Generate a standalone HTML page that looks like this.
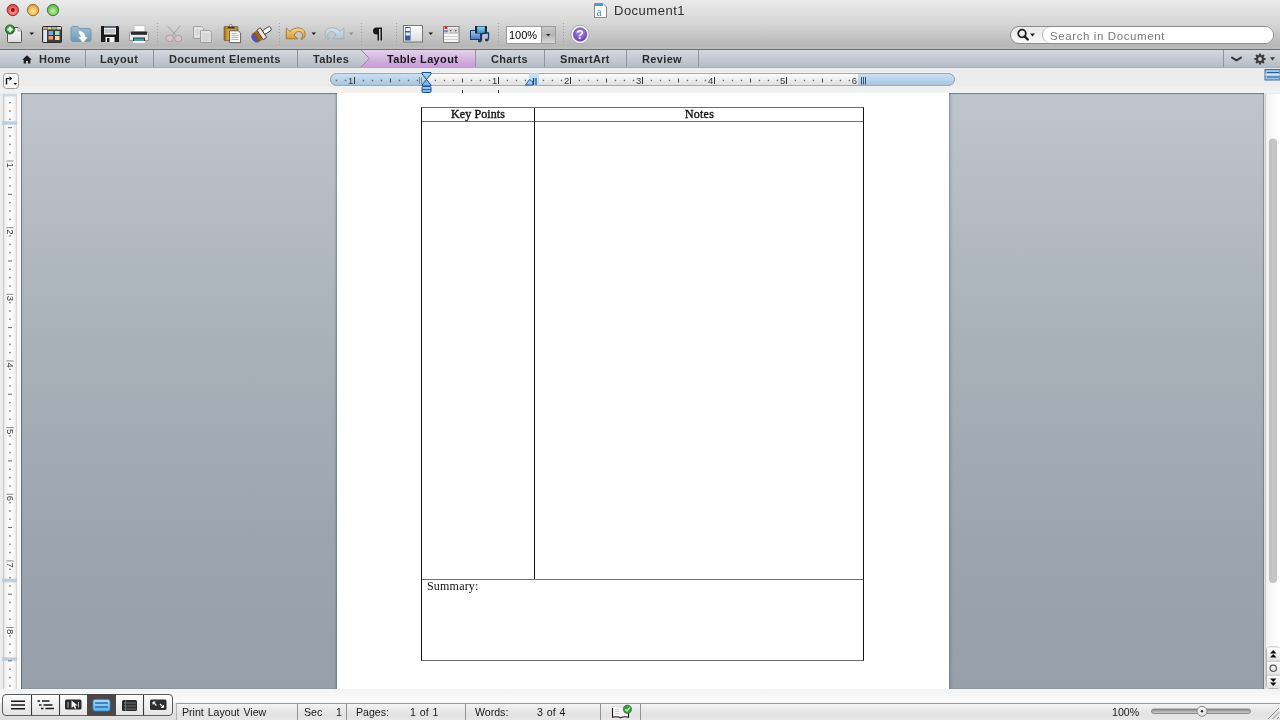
<!DOCTYPE html>
<html><head><meta charset="utf-8">
<style>
*{margin:0;padding:0;box-sizing:border-box}
html,body{width:1280px;height:720px;overflow:hidden;background:#ececec;font-family:"Liberation Sans",sans-serif}
.a{position:absolute}
#top{left:0;top:0;width:1280px;height:50px;background:linear-gradient(#eaeaea 0px,#d8d8d8 22px,#c2c2c2 38px,#b6b6b6 46px,#bdbdbd 48px);border-bottom:1px solid #6e6e6e}
#tabs{left:0;top:50px;width:1280px;height:20px;background:linear-gradient(#d4d8de 0px,#c4cad2 9px,#b3bcc6 17px,#a9b1bb 17px,#a9b1bb 18px,#e2e5e8 18px,#f4f5f7 20px)}
.tab{position:absolute;top:0;height:19px;font-weight:bold;font-size:11px;color:#2c2c2c;line-height:19px;letter-spacing:0.35px;white-space:nowrap}
.tsep{position:absolute;top:0;width:1px;height:17px;background:#8f969f}
#rulerbar{left:0;top:70px;width:1280px;height:23px;background:linear-gradient(#ececec 0px,#ececec 16px,#f0f0f0 18px,#f2f2f2 23px)}
#doc{left:21px;top:93px;width:1243px;height:596px;background:linear-gradient(#bec5cd 0%,#a9b1b9 40%,#9ca5ae 75%,#97a0a9 100%);box-shadow:inset 0 1px 1px rgba(40,45,50,0.45),inset 1px 0 1px rgba(40,45,55,0.45),inset -1px 0 1px rgba(40,45,55,0.3)}
#page{left:337px;top:93px;width:612px;height:596px;background:#fff;box-shadow:-1px 0 2px rgba(40,45,55,0.35),1px 0 3px rgba(40,45,55,0.35);clip-path:inset(0 -6px 0 -6px)}
#vr{left:3px;top:94px;width:14px;height:595px;background:linear-gradient(90deg,#e9e9e9,#fbfbfb 50%,#e9e9e9);border-left:1px solid #c7c7c7;border-right:1px solid #c7c7c7}
#vstrip{left:17px;top:94px;width:4px;height:595px;background:#f6f6f6}
#scroll{left:1264px;top:94px;width:16px;height:595px;background:linear-gradient(90deg,#e4e4e4,#fafafa 40%,#ffffff)}
#status{left:0;top:689px;width:1280px;height:31px;background:linear-gradient(#f3f3f3,#fbfbfb 13px,#ebebeb 14px,#dcdcdc 31px)}
.st{position:absolute;font-size:10.6px;color:#1a1a1a;top:706px;white-space:nowrap;word-spacing:1px}
.ssep{position:absolute;top:703px;width:1px;height:17px;background:#939393}
.serif{font-family:"Liberation Serif",serif}
</style></head><body>
<div id="wrap" style="position:absolute;left:0;top:0;width:1280px;height:720px;overflow:hidden;will-change:transform">
<div id="top" class="a"></div>
<div id="tabs" class="a"></div>
<div id="rulerbar" class="a"></div>
<div id="doc" class="a"></div>
<div id="page" class="a"></div>
<div id="vr" class="a"></div>
<div id="vstrip" class="a"></div>
<div id="scroll" class="a"></div>
<div id="status" class="a"></div>

<!-- traffic lights -->
<svg class="a" style="left:0;top:0" width="70" height="22">
<defs>
<radialGradient id="gr" cx="50%" cy="60%" r="55%"><stop offset="0" stop-color="#ffb0a8"/><stop offset="1" stop-color="#d8403a"/></radialGradient>
<radialGradient id="gy" cx="50%" cy="60%" r="55%"><stop offset="0" stop-color="#ffe6a0"/><stop offset="1" stop-color="#e0a038"/></radialGradient>
<radialGradient id="gg" cx="50%" cy="60%" r="55%"><stop offset="0" stop-color="#c8f5a8"/><stop offset="1" stop-color="#58b040"/></radialGradient>
</defs>
<circle cx="12.8" cy="10" r="5.7" fill="url(#gr)" stroke="#8a2a28" stroke-width="0.9"/>
<circle cx="12.8" cy="10" r="2" fill="#8e0d0a"/>
<circle cx="33" cy="10" r="5.7" fill="url(#gy)" stroke="#9a6a20" stroke-width="0.9"/>
<circle cx="53" cy="10" r="5.7" fill="url(#gg)" stroke="#3c7a30" stroke-width="0.9"/>
</svg>


<!-- toolbar icons -->
<svg class="a" style="left:0;top:20px" width="600" height="28">
<defs>
<linearGradient id="pg" x1="0" y1="0" x2="0" y2="1"><stop offset="0" stop-color="#ffffff"/><stop offset="1" stop-color="#dcdcdc"/></linearGradient>
<radialGradient id="grn" cx="50%" cy="45%" r="55%"><stop offset="0" stop-color="#a8e8a0"/><stop offset="0.6" stop-color="#3a9a3a"/><stop offset="1" stop-color="#1e6a22"/></radialGradient>
<linearGradient id="fold" x1="0" y1="0" x2="0" y2="1"><stop offset="0" stop-color="#9cc0da"/><stop offset="1" stop-color="#6f98b6"/></linearGradient>
<linearGradient id="gold" x1="0" y1="0" x2="0" y2="1"><stop offset="0" stop-color="#fbd68a"/><stop offset="1" stop-color="#d8962e"/></linearGradient>
<linearGradient id="bluegr" x1="0" y1="0" x2="0" y2="1"><stop offset="0" stop-color="#d8e6ee"/><stop offset="1" stop-color="#a9c1d0"/></linearGradient>
<radialGradient id="purp" cx="50%" cy="35%" r="65%"><stop offset="0" stop-color="#b088e8"/><stop offset="1" stop-color="#6a40b8"/></radialGradient>
<linearGradient id="brsh" x1="0" y1="0" x2="1" y2="1"><stop offset="0" stop-color="#c89040"/><stop offset="1" stop-color="#7a4a18"/></linearGradient>
</defs>
<!-- new doc -->
<path d="M7.5 7.5H18L21.5 11V21.6Q21.5 22.5 20.6 22.5H8.4Q7.5 22.5 7.5 21.6Z" fill="url(#pg)" stroke="#555" stroke-width="1"/>
<path d="M18 7.5V11H21.5" fill="#eee" stroke="#888" stroke-width="0.8"/>
<circle cx="10" cy="9.5" r="4.6" fill="url(#grn)" stroke="#1d5a1d" stroke-width="0.8"/>
<path d="M10 6.8V12.2M7.3 9.5H12.7" stroke="#e8ffe8" stroke-width="2"/>
<path d="M29.5 12.5H34L31.75 15Z" fill="#111"/>
<!-- gallery -->
<rect x="42.5" y="6.5" width="19" height="16" rx="1" fill="#3e3e3e" stroke="#2a2a2a"/>
<rect x="43" y="7" width="4" height="2.5" fill="#e89a8a"/><rect x="47.5" y="7" width="4" height="2.5" fill="#e8d07a"/><rect x="52" y="7" width="4" height="2.5" fill="#8cc87a"/><rect x="56.5" y="7" width="4.5" height="2.5" fill="#d8d8d8"/>
<rect x="43.2" y="10" width="3.8" height="12" fill="#dde8f4"/>
<rect x="48.5" y="11" width="4.5" height="4" fill="#7aa8d8"/><rect x="55" y="11" width="4.5" height="4" fill="#9ae0d0"/>
<rect x="48.5" y="16" width="4.5" height="3.5" fill="#f0a070"/><rect x="55" y="16" width="4.5" height="4" fill="#f8d0a8"/>
<!-- folder -->
<path d="M71 8.5Q71 6.5 73 6.5H78L79.5 8.5H89Q91 8.5 91 10.5V19.5Q91 21.5 89 21.5H73Q71 21.5 71 19.5Z" fill="url(#fold)" stroke="#6a8ea8" stroke-width="0.8"/>
<path d="M78.5 10.5Q85 11 85.5 17L88 17L83 23L78 17L80.5 17Q80 13.5 78.5 13.5Z" fill="#fafafa" stroke="#8aa" stroke-width="0.4"/>
<!-- floppy -->
<path d="M101 6H118L119 7V22H101Z" fill="#1a1a1a"/>
<rect x="104" y="6.5" width="12" height="8" fill="#f0f0f0"/><rect x="104" y="6.5" width="12" height="1.3" fill="#2a4a7a"/>
<rect x="104.5" y="9" width="11" height="4.5" fill="#c8c8c8"/>
<rect x="105.5" y="17" width="9" height="5" fill="#f4f4f4"/><rect x="107" y="18" width="2.5" height="4" fill="#1a1a1a"/>
<!-- printer -->
<rect x="134" y="5.5" width="11" height="6" fill="#fafafa" stroke="#aaa" stroke-width="0.6"/>
<path d="M129.5 14Q129.5 11.5 132 11.5H146Q148.5 11.5 148.5 14V20.5H129.5Z" fill="#e8e8e8" stroke="#888" stroke-width="0.8"/>
<rect x="131" y="11.8" width="16" height="3" fill="#2a2a2a"/>
<rect x="133" y="17.5" width="12" height="5" fill="#2a3a40"/><rect x="134" y="18.5" width="10" height="3" fill="#4a9aa8"/>
<rect x="133" y="21" width="12" height="2" fill="#f4f4f4"/>
<!-- sep -->
<path d="M157.5 3V26" stroke="#9c9c9c" stroke-width="0.9" stroke-dasharray="1 2"/>
<!-- scissors faded -->
<g opacity="0.8"><path d="M167.5 6L176 15.5M180.5 5.5L172 15.5" stroke="#909090" stroke-width="0.9"/>
<ellipse cx="169.6" cy="18.4" rx="3.9" ry="3.4" fill="#dcc6ca" stroke="#a8909a" stroke-width="1"/>
<ellipse cx="178.2" cy="18.6" rx="3.6" ry="3.2" fill="#dcc6ca" stroke="#a8909a" stroke-width="1"/></g>
<!-- copy faded -->
<g opacity="0.6"><path d="M193.5 6.5H201.5L203.5 8.5V18.5H193.5Z" fill="#f4f4f4" stroke="#8a8a8a"/><path d="M200.5 10.5H209.5L211.5 12.5V22.5H200.5Z" fill="#f4f4f4" stroke="#8a8a8a"/>
<path d="M202.5 14H209.5M202.5 16H209.5M202.5 18H209.5M202.5 20H209.5M195.5 10H199.5M195.5 12H199.5M195.5 14H199.5" stroke="#c0c0c0" stroke-width="0.6"/></g>
<!-- paste -->
<defs><linearGradient id="clipg" x1="0" y1="0" x2="1" y2="0"><stop offset="0" stop-color="#9a6c1c"/><stop offset="0.3" stop-color="#d8aa50"/><stop offset="1" stop-color="#b88a30"/></linearGradient>
<linearGradient id="brg" x1="0" y1="0" x2="1" y2="0"><stop offset="0" stop-color="#7a4a18"/><stop offset="1" stop-color="#c89048"/></linearGradient></defs>
<rect x="224" y="6.5" width="14" height="14" rx="0.8" fill="url(#clipg)" stroke="#6a4a10" stroke-width="0.6"/>
<path d="M227 8.5H235L234 6.8H228Z" fill="#3a3020"/>
<circle cx="230.8" cy="5.6" r="1.3" fill="#f0f0f0" stroke="#555" stroke-width="0.6"/>
<path d="M229.5 10.8H238.3L240.6 13V22.6H229.5Z" fill="#fafafa" stroke="#555" stroke-width="0.9"/>
<path d="M231.5 13.5H236.5M231.5 15.5H238.5M231.5 17.5H238.5M231.5 19.5H238.5" stroke="#9a9a9a" stroke-width="0.7"/>
<!-- brush -->
<g transform="translate(260.2,14.8) rotate(-33)">
<path d="M-5.5 -5.2Q-9.5 -4.5 -9.2 0Q-9 4.5 -5.5 5.2Z" fill="#4a52c8"/>
<path d="M0 -5.6L-5.8 -5.2V5.2L0 5.6Z" fill="url(#brg)"/>
<path d="M-1.5 -5V5M-3.5 -5V5" stroke="#6a4010" stroke-width="0.5"/>
<rect x="3.5" y="-2.3" width="9.2" height="4.6" rx="2.3" fill="#f6f6f6" stroke="#2a2a2a" stroke-width="0.8"/>
<rect x="-0.2" y="-5.8" width="4.2" height="11.6" rx="0.8" fill="#efe6d4" stroke="#2a2a2a" stroke-width="0.8"/>
</g>
<!-- sep -->
<path d="M279.5 3V26" stroke="#9c9c9c" stroke-width="0.9" stroke-dasharray="1 2"/>
<!-- undo -->
<g transform="translate(282,2)"><path d="M4.3 6.1L8 9.5C11 6 17 4.5 21 7.5C24 10 24 15 20.2 17.3L18.8 17C21.5 14 21 11 18 9.7C16 9 13.5 10 12.1 13L15.6 16.8L4.3 16.8Z" fill="url(#gold)" stroke="#8a6a30" stroke-width="0.8"/></g>
<path d="M311.5 12.5H316L313.75 15Z" fill="#111"/>
<!-- redo faded -->
<g transform="matrix(-1 0 0 1 630.15 0) translate(282,2)"><path d="M4.3 6.1L8 9.5C11 6 17 4.5 21 7.5C24 10 24 15 20.2 17.3L18.8 17C21.5 14 21 11 18 9.7C16 9 13.5 10 12.1 13L15.6 16.8L4.3 16.8Z" fill="url(#bluegr)" stroke="#9aacb8" stroke-width="0.8"/></g>
<path d="M349 12.5H353.5L351.25 15Z" fill="#888"/>
<path d="M361.5 3V26" stroke="#9c9c9c" stroke-width="0.9" stroke-dasharray="1 2"/>
<!-- pilcrow -->
<path d="M382.5 7.5H376.5Q373 7.5 373 11Q373 14.5 376.5 14.5H377.5V20.5H379V9H380.5V20.5H382V7.5Z" fill="#1a1a1a"/>
<path d="M396.5 3V26" stroke="#9c9c9c" stroke-width="0.9" stroke-dasharray="1 2"/>
<!-- sidebar -->
<rect x="403.5" y="5.5" width="19" height="16.5" fill="url(#pg)" stroke="#777"/>
<rect x="405" y="7" width="5.5" height="13.5" fill="#3a5a9a"/>
<rect x="405.6" y="8" width="4.3" height="3" fill="#f4f8ff"/><rect x="405.6" y="12.5" width="4.3" height="3" fill="#e0ecf8"/>
<path d="M428.5 12.5H433L430.75 15Z" fill="#111"/>
<!-- form -->
<rect x="443.5" y="6.5" width="15.5" height="16" fill="#f6f6f6" stroke="#7a7a7a"/>
<path d="M444 13.5H459M444 16.5H459M444 19.5H459" stroke="#d0d0d0" stroke-width="1"/>
<path d="M444.5 6.5L447.5 9.2M447.5 6.5L444.5 9.2" stroke="#c02020" stroke-width="1.1"/>
<rect x="444" y="10" width="4" height="2.5" fill="#7a98b8"/>
<rect x="449" y="9" width="4" height="3.5" fill="#fff" stroke="#888" stroke-width="0.5"/><rect x="454" y="9" width="4" height="3.5" fill="#fff" stroke="#888" stroke-width="0.5"/>
<path d="M450.3 9.8L452 10.75L450.3 11.7ZM455.3 9.8L457 10.75L455.3 11.7Z" fill="#111"/>
<!-- media -->
<defs><linearGradient id="phg" x1="0" y1="0" x2="0" y2="1"><stop offset="0" stop-color="#a8c8ec"/><stop offset="1" stop-color="#4a78c0"/></linearGradient>
<linearGradient id="flg" x1="0" y1="0" x2="0" y2="1"><stop offset="0" stop-color="#8ad8f8"/><stop offset="1" stop-color="#3a90c8"/></linearGradient></defs>
<rect x="470.5" y="10.5" width="10" height="9" fill="url(#phg)" stroke="#1a3a70" stroke-width="1"/>
<rect x="475" y="6" width="12" height="7.5" fill="#1c2c3c"/>
<rect x="477.2" y="6.6" width="7.6" height="6.4" fill="url(#flg)"/>
<path d="M481.5 13.5V20.5M488.5 12.5V19.5" stroke="#1a3a6a" stroke-width="1.3"/>
<path d="M481.5 13.8L488.5 12.8" stroke="#1a3a6a" stroke-width="1.6"/>
<ellipse cx="479.8" cy="21" rx="1.9" ry="1.4" fill="#1a3a6a"/><ellipse cx="486.8" cy="20" rx="1.9" ry="1.4" fill="#1a3a6a"/>
<path d="M498.5 3V26" stroke="#9c9c9c" stroke-width="0.9" stroke-dasharray="1 2"/>
<!-- zoom box -->
<rect x="506.5" y="6.5" width="49" height="17" fill="#fff" stroke="#9a9a9a"/>
<defs><linearGradient id="zdg" x1="0" y1="0" x2="0" y2="1"><stop offset="0" stop-color="#c8c8c8"/><stop offset="0.5" stop-color="#b4b4b4"/><stop offset="1" stop-color="#d8d8d8"/></linearGradient></defs><rect x="541.5" y="7" width="13.5" height="16" fill="url(#zdg)"/>
<path d="M541.5 6.5V23.5" stroke="#9a9a9a"/>
<path d="M546 14H550.5L548.25 16.5Z" fill="#333"/>
<path d="M563.5 3V26" stroke="#9c9c9c" stroke-width="0.9" stroke-dasharray="1 2"/>
<!-- help -->
<circle cx="580.1" cy="14.5" r="9.2" fill="#f4f4f4" stroke="#9a9a9a" stroke-width="0.8"/>
<circle cx="580.1" cy="14.5" r="6.8" fill="url(#purp)" stroke="#5a3a98" stroke-width="0.5"/>
</svg>
<div class="a" style="left:509px;top:29px;font-size:11px;color:#000">100%</div>
<div class="a" style="left:576px;top:27px;font-size:13px;font-weight:bold;color:#fff">?</div>

<!-- ruler -->
<svg class="a" style="left:0;top:69px" width="1280" height="25">
<defs>
<linearGradient id="rbl" x1="0" y1="0" x2="0" y2="1"><stop offset="0" stop-color="#c9e0f4"/><stop offset="1" stop-color="#a9c6de"/></linearGradient>
<linearGradient id="rwh" x1="0" y1="0" x2="0" y2="1"><stop offset="0" stop-color="#fdfdfd"/><stop offset="1" stop-color="#dedede"/></linearGradient>
<linearGradient id="mk" x1="0" y1="0" x2="0" y2="1"><stop offset="0" stop-color="#a8d4f4"/><stop offset="1" stop-color="#70b0e0"/></linearGradient>
</defs>
<rect x="329" y="3.5" width="627" height="14.0" rx="7.5" fill="#f8f8f8"/>
<rect x="330.5" y="4.5" width="624" height="12.0" rx="6" fill="url(#rwh)" stroke="#9aa4ac" stroke-width="1"/>
<path d="M426.5 5.0H336.5A5.5 5.5 0 0 0 336.5 16.0H426.5Z" fill="url(#rbl)"/>
<path d="M858 5.0H948.5A5.5 5.5 0 0 1 948.5 16.0H858Z" fill="url(#rbl)"/>
<rect x="330.5" y="4.5" width="624" height="12.0" rx="6" fill="none" stroke="#a2a9af" stroke-width="1"/>
<rect x="335.75" y="10.75" width="1.4" height="1.4" fill="#666"/>
<rect x="344.75" y="10.75" width="1.4" height="1.4" fill="#666"/>
<rect x="354.0" y="8" width="1" height="7" fill="#333"/>
<text x="353.3" y="15" font-family="Liberation Sans" font-size="9.5" text-anchor="end" fill="#3a3a3a">1</text>
<rect x="362.75" y="10.75" width="1.4" height="1.4" fill="#666"/>
<rect x="371.75" y="10.75" width="1.4" height="1.4" fill="#666"/>
<rect x="380.75" y="10.75" width="1.4" height="1.4" fill="#666"/>
<rect x="390.0" y="9.5" width="1" height="4" fill="#444"/>
<rect x="398.75" y="10.75" width="1.4" height="1.4" fill="#666"/>
<rect x="407.75" y="10.75" width="1.4" height="1.4" fill="#666"/>
<rect x="416.75" y="10.75" width="1.4" height="1.4" fill="#666"/>
<rect x="434.75" y="10.75" width="1.4" height="1.4" fill="#666"/>
<rect x="443.75" y="10.75" width="1.4" height="1.4" fill="#666"/>
<rect x="452.75" y="10.75" width="1.4" height="1.4" fill="#666"/>
<rect x="462.0" y="9.5" width="1" height="4" fill="#444"/>
<rect x="470.75" y="10.75" width="1.4" height="1.4" fill="#666"/>
<rect x="479.75" y="10.75" width="1.4" height="1.4" fill="#666"/>
<rect x="488.75" y="10.75" width="1.4" height="1.4" fill="#666"/>
<rect x="498.0" y="8" width="1" height="7" fill="#333"/>
<text x="497.3" y="15" font-family="Liberation Sans" font-size="9.5" text-anchor="end" fill="#3a3a3a">1</text>
<rect x="506.75" y="10.75" width="1.4" height="1.4" fill="#666"/>
<rect x="515.75" y="10.75" width="1.4" height="1.4" fill="#666"/>
<rect x="524.75" y="10.75" width="1.4" height="1.4" fill="#666"/>
<rect x="534.0" y="9.5" width="1" height="4" fill="#444"/>
<rect x="542.75" y="10.75" width="1.4" height="1.4" fill="#666"/>
<rect x="551.75" y="10.75" width="1.4" height="1.4" fill="#666"/>
<rect x="560.75" y="10.75" width="1.4" height="1.4" fill="#666"/>
<rect x="570.0" y="8" width="1" height="7" fill="#333"/>
<text x="569.3" y="15" font-family="Liberation Sans" font-size="9.5" text-anchor="end" fill="#3a3a3a">2</text>
<rect x="578.75" y="10.75" width="1.4" height="1.4" fill="#666"/>
<rect x="587.75" y="10.75" width="1.4" height="1.4" fill="#666"/>
<rect x="596.75" y="10.75" width="1.4" height="1.4" fill="#666"/>
<rect x="606.0" y="9.5" width="1" height="4" fill="#444"/>
<rect x="614.75" y="10.75" width="1.4" height="1.4" fill="#666"/>
<rect x="623.75" y="10.75" width="1.4" height="1.4" fill="#666"/>
<rect x="632.75" y="10.75" width="1.4" height="1.4" fill="#666"/>
<rect x="642.0" y="8" width="1" height="7" fill="#333"/>
<text x="641.3" y="15" font-family="Liberation Sans" font-size="9.5" text-anchor="end" fill="#3a3a3a">3</text>
<rect x="650.75" y="10.75" width="1.4" height="1.4" fill="#666"/>
<rect x="659.75" y="10.75" width="1.4" height="1.4" fill="#666"/>
<rect x="668.75" y="10.75" width="1.4" height="1.4" fill="#666"/>
<rect x="678.0" y="9.5" width="1" height="4" fill="#444"/>
<rect x="686.75" y="10.75" width="1.4" height="1.4" fill="#666"/>
<rect x="695.75" y="10.75" width="1.4" height="1.4" fill="#666"/>
<rect x="704.75" y="10.75" width="1.4" height="1.4" fill="#666"/>
<rect x="714.0" y="8" width="1" height="7" fill="#333"/>
<text x="713.3" y="15" font-family="Liberation Sans" font-size="9.5" text-anchor="end" fill="#3a3a3a">4</text>
<rect x="722.75" y="10.75" width="1.4" height="1.4" fill="#666"/>
<rect x="731.75" y="10.75" width="1.4" height="1.4" fill="#666"/>
<rect x="740.75" y="10.75" width="1.4" height="1.4" fill="#666"/>
<rect x="750.0" y="9.5" width="1" height="4" fill="#444"/>
<rect x="758.75" y="10.75" width="1.4" height="1.4" fill="#666"/>
<rect x="767.75" y="10.75" width="1.4" height="1.4" fill="#666"/>
<rect x="776.75" y="10.75" width="1.4" height="1.4" fill="#666"/>
<rect x="786.0" y="8" width="1" height="7" fill="#333"/>
<text x="785.3" y="15" font-family="Liberation Sans" font-size="9.5" text-anchor="end" fill="#3a3a3a">5</text>
<rect x="794.75" y="10.75" width="1.4" height="1.4" fill="#666"/>
<rect x="803.75" y="10.75" width="1.4" height="1.4" fill="#666"/>
<rect x="812.75" y="10.75" width="1.4" height="1.4" fill="#666"/>
<rect x="822.0" y="9.5" width="1" height="4" fill="#444"/>
<rect x="830.75" y="10.75" width="1.4" height="1.4" fill="#666"/>
<rect x="839.75" y="10.75" width="1.4" height="1.4" fill="#666"/>
<rect x="848.75" y="10.75" width="1.4" height="1.4" fill="#666"/>
<text x="857.0" y="15" font-family="Liberation Sans" font-size="9.5" text-anchor="end" fill="#3a3a3a">6</text>
<path d="M419.5 8V15M421.5 8V15" stroke="#2a6ab0" stroke-width="0.6"/>
<path d="M422 3.5H431V5L426.5 10.5L431 16V17H422V16L426.5 10.5L422 5Z" fill="url(#mk)" stroke="#1c4a88" stroke-width="1"/>
<rect x="422" y="17.5" width="9" height="6" rx="1.2" fill="url(#mk)" stroke="#1c4a88" stroke-width="1"/>
<path d="M422.5 20.5H430.5" stroke="#1c4a88" stroke-width="0.8"/>
<rect x="529" y="4" width="10" height="12.5" fill="#b4dcf8" opacity="0.85"/>
<path d="M525.5 16L529.5 10.5L533 13V16Z" fill="#9ad0f4" stroke="#1c4a88" stroke-width="0.9"/>
<path d="M533.5 9V16M536 9V16" stroke="#1c4a88" stroke-width="1.2"/>
<path d="M861.5 8V15.5M863.5 8V15.5M865.5 8V15.5" stroke="#1e5aa0" stroke-width="1"/>
<rect x="462" y="21" width="1" height="3" fill="#333"/><rect x="498" y="21" width="1" height="3" fill="#333"/>
<rect x="3.5" y="4.5" width="15" height="15" rx="3" fill="#f6f6f6" stroke="#9a9a9a" stroke-width="1"/>
<path d="M6.5 9V15.5" stroke="#111" stroke-width="1.4"/><path d="M6.5 9.5H9.5" stroke="#111" stroke-width="1.2"/><path d="M9.5 7.2L12.3 9.5L9.5 11.8Z" fill="#111"/><path d="M13.5 14H17L15.25 16Z" fill="#111"/>
<rect x="1265" y="0.5" width="15" height="10.5" fill="#9ec6ec" stroke="#3a6aa8" stroke-width="1"/><path d="M1267 3.5H1279M1267 8H1279" stroke="#2a5a98" stroke-width="1"/><path d="M1265 5.75H1280" stroke="#e8f2fc" stroke-width="1"/>
</svg>
<!-- vruler+scroll -->
<svg class="a" style="left:0;top:94px" width="22" height="595">
<defs><linearGradient id="vrg" x1="0" y1="0" x2="1" y2="0"><stop offset="0" stop-color="#e6e6e6"/><stop offset="0.35" stop-color="#fbfbfb"/><stop offset="0.7" stop-color="#fdfdfd"/><stop offset="1" stop-color="#e4e4e4"/></linearGradient></defs>
<rect x="0" y="0" width="3" height="595" fill="#ececec"/>
<rect x="3.5" y="-1" width="13" height="597" fill="url(#vrg)" stroke="#c8c8c8" stroke-width="1"/><rect x="16" y="0" width="1" height="595" fill="#d6d6d6"/>
<rect x="17" y="0" width="4" height="595" fill="#f9f9fa"/>
<rect x="4" y="0" width="12" height="2.5" fill="#cddbe8"/>
<rect x="2" y="27.25" width="15" height="3.5" fill="#b4cce0" opacity="0.9"/>
<rect x="2" y="484.75" width="15" height="3.5" fill="#b4cce0" opacity="0.9"/>
<rect x="2" y="563.25" width="15" height="3.5" fill="#b4cce0" opacity="0.9"/>
<rect x="9.25" y="7.931249999999995" width="1.5" height="1.5" fill="#777"/>
<rect x="9.25" y="16.262499999999996" width="1.5" height="1.5" fill="#777"/>
<rect x="9.25" y="24.593749999999996" width="1.5" height="1.5" fill="#777"/>
<rect x="8" y="33.175" width="4" height="1" fill="#666"/>
<rect x="9.25" y="41.256249999999994" width="1.5" height="1.5" fill="#777"/>
<rect x="9.25" y="49.5875" width="1.5" height="1.5" fill="#777"/>
<rect x="9.25" y="57.91875" width="1.5" height="1.5" fill="#777"/>
<rect x="6.5" y="66.5" width="7" height="1" fill="#8a8a8a"/>
<text transform="translate(7,68.50) rotate(90)" font-family="Liberation Sans" font-size="9.5" fill="#3a3a3a">1</text>
<rect x="9.25" y="74.58125" width="1.5" height="1.5" fill="#777"/>
<rect x="9.25" y="82.9125" width="1.5" height="1.5" fill="#777"/>
<rect x="9.25" y="91.24375" width="1.5" height="1.5" fill="#777"/>
<rect x="8" y="99.825" width="4" height="1" fill="#666"/>
<rect x="9.25" y="107.90625" width="1.5" height="1.5" fill="#777"/>
<rect x="9.25" y="116.23750000000001" width="1.5" height="1.5" fill="#777"/>
<rect x="9.25" y="124.56875000000001" width="1.5" height="1.5" fill="#777"/>
<rect x="6.5" y="133.15" width="7" height="1" fill="#8a8a8a"/>
<text transform="translate(7,135.15) rotate(90)" font-family="Liberation Sans" font-size="9.5" fill="#3a3a3a">2</text>
<rect x="9.25" y="141.23125000000002" width="1.5" height="1.5" fill="#777"/>
<rect x="9.25" y="149.5625" width="1.5" height="1.5" fill="#777"/>
<rect x="9.25" y="157.89375" width="1.5" height="1.5" fill="#777"/>
<rect x="8" y="166.475" width="4" height="1" fill="#666"/>
<rect x="9.25" y="174.55625" width="1.5" height="1.5" fill="#777"/>
<rect x="9.25" y="182.88750000000002" width="1.5" height="1.5" fill="#777"/>
<rect x="9.25" y="191.21875" width="1.5" height="1.5" fill="#777"/>
<rect x="6.5" y="199.8" width="7" height="1" fill="#8a8a8a"/>
<text transform="translate(7,201.80) rotate(90)" font-family="Liberation Sans" font-size="9.5" fill="#3a3a3a">3</text>
<rect x="9.25" y="207.88125000000002" width="1.5" height="1.5" fill="#777"/>
<rect x="9.25" y="216.2125" width="1.5" height="1.5" fill="#777"/>
<rect x="9.25" y="224.54375000000002" width="1.5" height="1.5" fill="#777"/>
<rect x="8" y="233.12500000000003" width="4" height="1" fill="#666"/>
<rect x="9.25" y="241.20625" width="1.5" height="1.5" fill="#777"/>
<rect x="9.25" y="249.53750000000002" width="1.5" height="1.5" fill="#777"/>
<rect x="9.25" y="257.86875" width="1.5" height="1.5" fill="#777"/>
<rect x="6.5" y="266.45000000000005" width="7" height="1" fill="#8a8a8a"/>
<text transform="translate(7,268.45) rotate(90)" font-family="Liberation Sans" font-size="9.5" fill="#3a3a3a">4</text>
<rect x="9.25" y="274.53125" width="1.5" height="1.5" fill="#777"/>
<rect x="9.25" y="282.86250000000007" width="1.5" height="1.5" fill="#777"/>
<rect x="9.25" y="291.19375" width="1.5" height="1.5" fill="#777"/>
<rect x="8" y="299.775" width="4" height="1" fill="#666"/>
<rect x="9.25" y="307.85625000000005" width="1.5" height="1.5" fill="#777"/>
<rect x="9.25" y="316.1875" width="1.5" height="1.5" fill="#777"/>
<rect x="9.25" y="324.51875000000007" width="1.5" height="1.5" fill="#777"/>
<rect x="6.5" y="333.1" width="7" height="1" fill="#8a8a8a"/>
<text transform="translate(7,335.10) rotate(90)" font-family="Liberation Sans" font-size="9.5" fill="#3a3a3a">5</text>
<rect x="9.25" y="341.18125" width="1.5" height="1.5" fill="#777"/>
<rect x="9.25" y="349.51250000000005" width="1.5" height="1.5" fill="#777"/>
<rect x="9.25" y="357.84375" width="1.5" height="1.5" fill="#777"/>
<rect x="8" y="366.42500000000007" width="4" height="1" fill="#666"/>
<rect x="9.25" y="374.50625" width="1.5" height="1.5" fill="#777"/>
<rect x="9.25" y="382.8375" width="1.5" height="1.5" fill="#777"/>
<rect x="9.25" y="391.16875000000005" width="1.5" height="1.5" fill="#777"/>
<rect x="6.5" y="399.75" width="7" height="1" fill="#8a8a8a"/>
<text transform="translate(7,401.75) rotate(90)" font-family="Liberation Sans" font-size="9.5" fill="#3a3a3a">6</text>
<rect x="9.25" y="407.83125000000007" width="1.5" height="1.5" fill="#777"/>
<rect x="9.25" y="416.1625" width="1.5" height="1.5" fill="#777"/>
<rect x="9.25" y="424.49375" width="1.5" height="1.5" fill="#777"/>
<rect x="8" y="433.07500000000005" width="4" height="1" fill="#666"/>
<rect x="9.25" y="441.15625" width="1.5" height="1.5" fill="#777"/>
<rect x="9.25" y="449.48750000000007" width="1.5" height="1.5" fill="#777"/>
<rect x="9.25" y="457.81875" width="1.5" height="1.5" fill="#777"/>
<rect x="6.5" y="466.4000000000001" width="7" height="1" fill="#8a8a8a"/>
<text transform="translate(7,468.40) rotate(90)" font-family="Liberation Sans" font-size="9.5" fill="#3a3a3a">7</text>
<rect x="9.25" y="474.48125000000005" width="1.5" height="1.5" fill="#777"/>
<rect x="9.25" y="482.8125" width="1.5" height="1.5" fill="#777"/>
<rect x="9.25" y="491.14375000000007" width="1.5" height="1.5" fill="#777"/>
<rect x="8" y="499.725" width="4" height="1" fill="#666"/>
<rect x="9.25" y="507.8062500000001" width="1.5" height="1.5" fill="#777"/>
<rect x="9.25" y="516.1375" width="1.5" height="1.5" fill="#777"/>
<rect x="9.25" y="524.4687500000001" width="1.5" height="1.5" fill="#777"/>
<rect x="6.5" y="533.0500000000001" width="7" height="1" fill="#8a8a8a"/>
<text transform="translate(7,535.05) rotate(90)" font-family="Liberation Sans" font-size="9.5" fill="#3a3a3a">8</text>
<rect x="9.25" y="541.13125" width="1.5" height="1.5" fill="#777"/>
<rect x="9.25" y="549.4625000000001" width="1.5" height="1.5" fill="#777"/>
<rect x="9.25" y="557.79375" width="1.5" height="1.5" fill="#777"/>
<rect x="8" y="566.3750000000001" width="4" height="1" fill="#666"/>
<rect x="9.25" y="574.4562500000001" width="1.5" height="1.5" fill="#777"/>
<rect x="9.25" y="582.7875" width="1.5" height="1.5" fill="#777"/>
<rect x="9.25" y="591.1187500000001" width="1.5" height="1.5" fill="#777"/>
</svg>
<svg class="a" style="left:1264px;top:94px" width="16" height="595">
<defs><linearGradient id="sbg" x1="0" y1="0" x2="1" y2="0"><stop offset="0" stop-color="#dcdcdc"/><stop offset="0.2" stop-color="#f4f4f4"/><stop offset="1" stop-color="#ffffff"/></linearGradient>
<linearGradient id="thm" x1="0" y1="0" x2="1" y2="0"><stop offset="0" stop-color="#bdbdbd"/><stop offset="0.5" stop-color="#c8c8c8"/><stop offset="1" stop-color="#c2c2c2"/></linearGradient>
<linearGradient id="btn" x1="0" y1="0" x2="0" y2="1"><stop offset="0" stop-color="#ffffff"/><stop offset="1" stop-color="#e2e2e2"/></linearGradient></defs>
<rect x="0" y="0" width="16" height="595" fill="url(#sbg)"/>
<rect x="1" y="0" width="1" height="595" fill="#d0d0d0"/>
<rect x="5" y="44.5" width="8" height="444.5" rx="4" fill="url(#thm)"/>
<rect x="2.5" y="553" width="14" height="41.5" rx="3" fill="#f2f2f2" stroke="#b4b4b4" stroke-width="1"/>
<rect x="3" y="553.5" width="13" height="13.5" fill="url(#btn)"/><rect x="3" y="567.5" width="13" height="13.5" fill="url(#btn)"/><rect x="3" y="581.5" width="13" height="12.5" fill="url(#btn)"/>
<path d="M3 567.25H16M3 581.25H16" stroke="#c4c4c4" stroke-width="1"/>
<path d="M6 559.5L9.25 556L12.5 559.5ZM6 563.5L9.25 560L12.5 563.5Z" fill="#111"/>
<circle cx="9.25" cy="574.25" r="3.2" fill="none" stroke="#555" stroke-width="1.2"/>
<path d="M6 584.5L9.25 588L12.5 584.5ZM6 588.5L9.25 592L12.5 588.5Z" fill="#111"/>
</svg>
<!-- title -->
<svg class="a" style="left:594px;top:3px" width="13" height="15"><path d="M0.5 0.5H9L12.5 4V14.5H0.5Z" fill="#fdfdfd" stroke="#8a8a8a"/><rect x="1" y="1" width="8" height="2" fill="#4a9ec8"/><text x="2.5" y="13" font-family="Liberation Serif" font-size="11.5" fill="#4a8ab0">a</text></svg>
<div class="a" style="left:614px;top:3px;font-size:13px;color:#2e2e2e;letter-spacing:0.5px">Document1</div>

<!-- search -->
<div class="a" style="left:1010px;top:26px;width:264px;height:18px;border-radius:9px;background:linear-gradient(#e8e8e8,#f8f8f8);border:1px solid #8c8c8c"></div>
<div class="a" style="left:1042px;top:27px;width:231px;height:16px;border-radius:8px;background:#fff;border-left:1px solid #b0b0b0"></div>
<div class="a" style="left:1050px;top:30px;font-size:11.5px;color:#777;letter-spacing:0.6px">Search in Document</div>
<svg class="a" style="left:1016px;top:28px" width="22" height="14"><circle cx="6" cy="5.5" r="3.8" fill="none" stroke="#1e1e1e" stroke-width="1.8"/><path d="M8.6 8.3L11.8 11.5" stroke="#1e1e1e" stroke-width="2.4" stroke-linecap="round"/><path d="M14 5.5h5l-2.5 3z" fill="#1e1e1e"/></svg>

<!-- tabs -->
<svg class="a" style="left:22px;top:55px" width="10" height="9"><path d="M5 0.3L9.8 4.8H8.3V8.5H6V6H4V8.5H1.7V4.8H0.2Z" fill="#1c1c1c"/></svg>
<div class="tab" style="left:39px;top:50px">Home</div>
<div class="tsep" style="left:85px;top:50px"></div>
<div class="tab" style="left:100px;top:50px">Layout</div>
<div class="tsep" style="left:153px;top:50px"></div>
<div class="tab" style="left:169px;top:50px">Document Elements</div>
<div class="tsep" style="left:297px;top:50px"></div>
<div class="tab" style="left:313px;top:50px">Tables</div>
<svg class="a" style="left:360px;top:50px" width="117" height="17">
<defs><linearGradient id="pk" x1="0" y1="0" x2="0" y2="1"><stop offset="0" stop-color="#e2d2ea"/><stop offset="1" stop-color="#c89ad6"/></linearGradient></defs>
<path d="M1 0H116V17H1L9.5 8.5Z" fill="url(#pk)"/>
<path d="M1 0L9.5 8.5L1 17" fill="none" stroke="#8a8f98" stroke-width="1"/>
<rect x="115" y="0" width="1" height="17" fill="#8f969f"/>
</svg>
<div class="tab" style="left:387px;top:50px;color:#1a1420">Table Layout</div>
<div class="tab" style="left:491px;top:50px">Charts</div>
<div class="tsep" style="left:544px;top:50px"></div>
<div class="tab" style="left:560px;top:50px">SmartArt</div>
<div class="tsep" style="left:626px;top:50px"></div>
<div class="tab" style="left:642px;top:50px">Review</div>
<div class="tsep" style="left:698px;top:50px"></div>
<div class="tsep" style="left:1223px;top:50px"></div>
<svg class="a" style="left:1228px;top:53px" width="52" height="14"><path d="M4 4.6L8.5 7.4L13 4.6" fill="none" stroke="#383838" stroke-width="2" stroke-linecap="round" stroke-linejoin="round"/>
<g transform="translate(32,6)" fill="#3c3c3c"><circle r="4"/><g stroke="#3c3c3c" stroke-width="2"><path d="M0 -5.6V5.6M-5.6 0H5.6M-3.96 -3.96L3.96 3.96M-3.96 3.96L3.96 -3.96"/></g><circle r="1.9" fill="#c9cdd3"/></g>
<path d="M42 4.2h5l-2.5 3.3z" fill="#383838"/></svg>

<!-- status bar -->
<div class="a" style="left:176px;top:703px;width:1104px;height:17px;background:linear-gradient(#f4f4f4 0px,#e8e8e8 6px,#e2e2e2 10px,#e8e8e8 17px);border-top:1px solid #9a9a9a;border-left:1px solid #b4b4b4"></div>
<div class="st" style="left:182px">Print Layout View</div>
<div class="ssep" style="left:297px"></div>
<div class="st" style="left:304px">Sec</div>
<div class="st" style="left:336px">1</div>
<div class="ssep" style="left:346px"></div>
<div class="st" style="left:356px">Pages:</div>
<div class="st" style="left:410px">1 of 1</div>
<div class="ssep" style="left:465px"></div>
<div class="st" style="left:475px">Words:</div>
<div class="st" style="left:537px">3 of 4</div>
<div class="ssep" style="left:600px"></div>
<div class="ssep" style="left:640px"></div>
<div class="st" style="left:1112px">100%</div>

<!-- view buttons -->
<svg class="a" style="left:0;top:689px" width="180" height="31">
<defs><linearGradient id="vb" x1="0" y1="0" x2="0" y2="1"><stop offset="0" stop-color="#fdfdfd"/><stop offset="1" stop-color="#e4e4e4"/></linearGradient>
<linearGradient id="vbs" x1="0" y1="0" x2="0" y2="1"><stop offset="0" stop-color="#a8dcfc"/><stop offset="1" stop-color="#5cb4ec"/></linearGradient></defs>
<rect x="2.5" y="5.5" width="170" height="21" rx="3.5" fill="url(#vb)" stroke="#5a5a5a" stroke-width="1"/>
<rect x="87" y="5" width="29" height="22" fill="#4c4848"/>
<path d="M31.5 6V26M59.5 6V26M143.5 6V26" stroke="#3a3a3a" stroke-width="1.1"/>
<path d="M11 12.25H25M11 16H25M11 19.75H25" stroke="#1a1a1a" stroke-width="1.6"/>
<path d="M37.5 12H40M42 12H49.5M39 16H41.5M43.5 16H52.5M41 19.5H43.5M45.5 19.5H54" stroke="#1a1a1a" stroke-width="1.5"/>
<rect x="65" y="10.5" width="16.5" height="10" rx="1.5" fill="#2a2a2a"/>
<path d="M68 13V18.5M78.5 13V18.5" stroke="#ddd" stroke-width="0.8"/>
<path d="M71.5 11.5L71.5 19L73.5 17.2L75 20L76.3 19.3L75 16.6H77.8Z" fill="#f4f4f4"/>
<rect x="93" y="10.5" width="17" height="11.5" rx="2" fill="url(#vbs)" stroke="#2e8ad0" stroke-width="0.8"/>
<path d="M95 14H108M95 18H108" stroke="#2a6aa8" stroke-width="1.5"/>
<rect x="122" y="11" width="15" height="11" rx="1.5" fill="#2a2a2a"/>
<path d="M124 14H136M124 17H136M124 20H136" stroke="#777" stroke-width="1"/>
<path d="M125.5 11V22" stroke="#888" stroke-width="0.7"/>
<rect x="150" y="10.5" width="16.5" height="10.5" rx="1.5" fill="#2e2e2e"/>
<path d="M153 13L156.5 16.5M153 13V15.5M153 13H155.5M163.5 18.5L160 15M163.5 18.5V16M163.5 18.5H161" stroke="#f4f4f4" stroke-width="1.1"/>
</svg>
<!-- book icon -->
<svg class="a" style="left:610px;top:704px" width="24" height="16">
<path d="M2.7 2.5V12.5Q7 11.5 10.5 13.3Q14 11.5 18.3 12.5V2.5Q14 1.5 10.5 3.3Q7 1.5 2.7 2.5Z" fill="#f8f8f8" stroke="#ccc" stroke-width="0.6"/>
<path d="M2.5 4V13.2Q7 12 10.5 13.8Q14 12 18.5 13.2V9" fill="none" stroke="#2a1a1a" stroke-width="1.1"/>
<path d="M5 5.5H9M5 7.5H9M5 9.5H9" stroke="#bbb" stroke-width="0.7"/>
<circle cx="17.4" cy="5.3" r="4.2" fill="#3a9a42" stroke="#2a6a2a" stroke-width="0.6"/>
<path d="M15.3 5.2L17 7L19.8 3.4" fill="none" stroke="#c8ffc0" stroke-width="1.4"/>
</svg>
<!-- slider -->
<svg class="a" style="left:1140px;top:700px" width="140" height="20">
<defs><linearGradient id="trk" x1="0" y1="0" x2="0" y2="1"><stop offset="0" stop-color="#8a8a8a"/><stop offset="1" stop-color="#cfcfcf"/></linearGradient>
<radialGradient id="knb" cx="50%" cy="40%" r="60%"><stop offset="0" stop-color="#ffffff"/><stop offset="1" stop-color="#dcdcdc"/></radialGradient></defs>
<rect x="11.5" y="9" width="99" height="4.5" rx="2.25" fill="url(#trk)" stroke="#7a7a7a" stroke-width="0.8"/>
<circle cx="62" cy="11.3" r="5" fill="url(#knb)" stroke="#8a8a8a" stroke-width="1"/>
<circle cx="62" cy="11.3" r="1.3" fill="#333"/>
<path d="M128 19L139 8M132.5 19L139 12.5M137 19L139 17" stroke="#8a8a8a" stroke-width="1"/>
</svg>

<!-- table -->
<div class="a" style="left:421px;top:107px;width:443px;height:554px;border:1px solid #111;border-top-color:#6a6a6a;border-bottom-color:#6a6a6a"></div>
<div class="a" style="left:422px;top:121px;width:441px;height:1px;background:#707070"></div>
<div class="a" style="left:422px;top:579px;width:441px;height:1px;background:#707070"></div>
<div class="a" style="left:534px;top:108px;width:1px;height:471px;background:#111"></div>
<div class="a serif" style="left:451px;top:107px;font-size:12px;font-weight:normal;color:#111;line-height:14px;-webkit-text-stroke:0.35px #111;letter-spacing:0.1px">Key Points</div>
<div class="a serif" style="left:685px;top:107px;font-size:12px;font-weight:normal;color:#111;line-height:14px;-webkit-text-stroke:0.35px #111;letter-spacing:0.2px">Notes</div>
<div class="a serif" style="left:427px;top:579px;font-size:12px;color:#111;line-height:14px;letter-spacing:0.2px">Summary:</div>
</div>
</body></html>
